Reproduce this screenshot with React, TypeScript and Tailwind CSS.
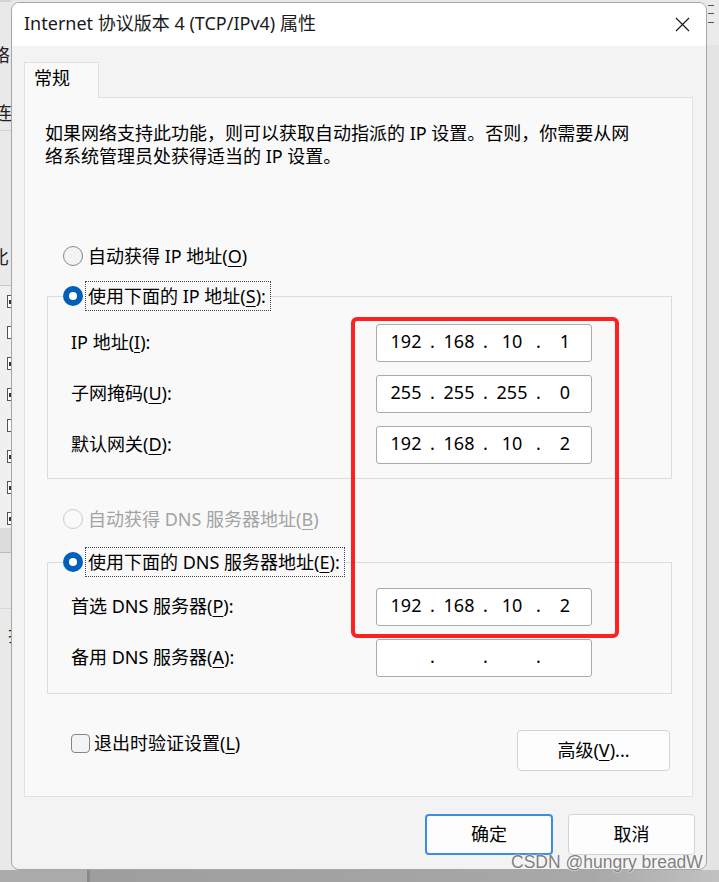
import { Fragment } from "react"

function U({ children }: { children: string }) {
  return <span className="underline decoration-1 underline-offset-[3px]">{children}</span>
}

function Radio({ checked = false, disabled = false }: { checked?: boolean; disabled?: boolean }) {
  if (checked) {
    return (
      <span className="flex h-[20px] w-[20px] shrink-0 items-center justify-center rounded-full bg-[#005fb8]">
        <span className="h-[8px] w-[8px] rounded-full bg-white" />
      </span>
    )
  }
  return (
    <span
      className={`h-[20px] w-[20px] shrink-0 rounded-full border ${
        disabled ? "border-[#cccccc] bg-[#f9f9f9]" : "border-[#868686] bg-[#f3f3f3]"
      }`}
    />
  )
}

function IpBox({ parts }: { parts: string[] }) {
  return (
    <div className="flex h-[38px] w-[216px] shrink-0 items-center rounded-[3px] border border-[#ababab] bg-white pb-[5px] pl-[6px] leading-[24px]">
      {parts.map((p, i) => (
        <Fragment key={i}>
          <span className="w-[46px] text-center">{p}</span>
          {i < 3 && <span className="w-[7px] text-center">.</span>}
        </Fragment>
      ))}
    </div>
  )
}

function Field({ label, parts }: { label: React.ReactNode; parts: string[] }) {
  return (
    <div className="ml-[8px] flex h-[38px] items-center">
      <div className="w-[305px] pb-[2px] leading-[24px]">{label}</div>
      <IpBox parts={parts} />
    </div>
  )
}

function Legend({ children }: { children: React.ReactNode }) {
  return (
    <legend>
      <div className="flex h-[30px] items-center">
        <Radio checked />
        <span className="ml-[2px] flex h-[30px] items-center border border-dotted border-[#444] pb-[1px] pl-[2px] pr-[4px] leading-[24px]">
          {children}
        </span>
      </div>
    </legend>
  )
}

// the window behind the dialog, only a sliver of it shows on the left
function LeftStrip() {
  const boxes = [true, false, true, true, false, true, true, true]
  return (
    <div className="flex w-[11px] shrink-0 flex-col overflow-hidden bg-[#e9e9e9] text-[18px] leading-[20px] text-[#222]">
      <div className="h-[2px] shrink-0 bg-[#d2d2d2]" />
      <div className="ml-[-8px] mt-[43px] shrink-0">络</div>
      <div className="ml-[-6px] mt-[38px] shrink-0">连</div>
      <div className="mt-[7px] h-px shrink-0 bg-[#d0d0d0]" />
      <div className="ml-[-9px] mt-[116px] shrink-0">比</div>
      <div className="mt-[18px] h-px shrink-0 bg-[#c6c6c6]" />
      <div className="flex shrink-0 flex-col bg-[#f0f0f0] pb-[3px] pt-[9px]">
        {boxes.map((c, i) => (
          <div
            key={i}
            className={`ml-[7px] flex h-[13px] w-[13px] shrink-0 items-center border border-[#555] bg-white ${
              i > 0 ? "mt-[18px]" : ""
            }`}
          >
            {c && <span className="ml-[1px] h-[4px] w-[2px] bg-[#333]" />}
          </div>
        ))}
      </div>
      <div className="h-[24px] shrink-0 bg-[#dcdcdc]" />
      <div className="h-px shrink-0 bg-[#bcbcbc]" />
      <div className="mt-[55px] h-px shrink-0 bg-[#d6d6d6]" />
      <div className="ml-[8px] mt-[16px] shrink-0">护</div>
    </div>
  )
}

function RightStrip() {
  return (
    <div className="flex w-[12px] shrink-0 flex-col bg-[#ebebeb]">
      <div className="ml-px mt-[5px] h-px w-[6px] bg-[#555]" />
      <div className="ml-px mt-[7px] h-px w-[6px] bg-[#555]" />
      <div className="ml-px mt-[8px] h-px w-[6px] bg-[#555]" />
      <div className="mt-[22px] flex-1 bg-[#e4e4e4]" />
    </div>
  )
}

export default function App() {
  return (
    <div className="relative flex h-[882px] w-[719px] flex-col overflow-hidden bg-[#e8e8e8] font-['Noto_Sans','Noto_Sans_CJK_SC',sans-serif] text-[18px] text-black">
      <div className="flex h-[870px] shrink-0">
        <LeftStrip />
        <div className="mt-[2px] flex h-[868px] w-[696px] shrink-0 flex-col overflow-hidden rounded-[8px] border border-[#a6a6a6] bg-[#f3f3f3]">
          {/* title bar */}
          <div className="flex h-[43px] shrink-0 items-center justify-between bg-white pb-[3px] pl-[12px] pr-[16px]">
            <span className="text-[18px] leading-[24px] text-[#1a1a1a]">Internet 协议版本 4 (TCP/IPv4) 属性</span>
            <svg width="15" height="15" viewBox="0 0 15 15" className="mt-[2px]">
              <path d="M1 1L14 14M14 1L1 14" stroke="#1a1a1a" strokeWidth="1.2" fill="none" />
            </svg>
          </div>

          {/* tab + panel */}
          <div className="ml-[12px] mt-[16px] flex flex-col">
            <div className="relative z-10 -mb-px flex h-[36px] w-[75px] items-center border border-b-0 border-[#e1e1e1] bg-[#f9f9f9] pb-[5px] pl-[9px] leading-[24px]">
              常规
            </div>
            <div className="flex h-[700px] w-[669px] flex-col border border-[#e1e1e1] bg-[#f9f9f9]">
              <p className="ml-[20px] mt-[24px] leading-[23px]">
                如果网络支持此功能，则可以获取自动指派的 IP 设置。否则，你需要从网
                <br />
                络系统管理员处获得适当的 IP 设置。
              </p>

              <div className="ml-[38px] mt-[76px] flex h-[24px] items-center leading-[24px]">
                <Radio />
                <span className="ml-[5px]">
                  自动获得 IP 地址(<U>O</U>)
                </span>
              </div>

              <fieldset className="ml-[22px] mt-[13px] w-[625px] border border-[#dcdcdc] px-[15px] pb-[14px]">
                <Legend>
                  使用下面的 IP 地址(<U>S</U>):
                </Legend>
                <div className="mt-[13px] flex flex-col gap-[13px]">
                  <Field label={<>IP 地址(<U>I</U>):</>} parts={["192", "168", "10", "1"]} />
                  <Field label={<>子网掩码(<U>U</U>):</>} parts={["255", "255", "255", "0"]} />
                  <Field label={<>默认网关(<U>D</U>):</>} parts={["192", "168", "10", "2"]} />
                </div>
              </fieldset>

              <div className="ml-[38px] mt-[28px] flex h-[24px] items-center leading-[24px] text-[#a3a3a3]">
                <Radio disabled />
                <span className="ml-[5px]">
                  自动获得 DNS 服务器地址(<U>B</U>)
                </span>
              </div>

              <fieldset className="ml-[22px] mt-[16px] w-[625px] border border-[#dcdcdc] px-[15px] pb-[16px]">
                <Legend>
                  使用下面的 DNS 服务器地址(<U>E</U>):
                </Legend>
                <div className="mt-[11px] flex flex-col gap-[13px]">
                  <Field label={<>首选 DNS 服务器(<U>P</U>):</>} parts={["192", "168", "10", "2"]} />
                  <Field label={<>备用 DNS 服务器(<U>A</U>):</>} parts={["", "", "", ""]} />
                </div>
              </fieldset>

              <div className="ml-[46px] mr-[22px] mt-[36px] flex items-start justify-between">
                <div className="mt-[1px] flex h-[24px] items-center leading-[24px]">
                  <span className="h-[19px] w-[19px] rounded-[4px] border border-[#868686] bg-[#f3f3f3]" />
                  <span className="ml-[4px]">
                    退出时验证设置(<U>L</U>)
                  </span>
                </div>
                <button className="flex h-[41px] w-[153px] items-center justify-center rounded-[4px] border border-[#d3d3d3] bg-[#fdfdfd] pb-[2px] leading-[24px]">
                  高级(<U>V</U>)...
                </button>
              </div>
            </div>
          </div>

          {/* dialog buttons */}
          <div className="mt-[17px] flex justify-end gap-[15px] pr-[11px]">
            <button className="flex h-[41px] w-[128px] items-center justify-center rounded-[4px] border-2 border-[#3d8ce0] bg-[#fdfdfd] pb-[2px] leading-[24px]">
              确定
            </button>
            <button className="flex h-[41px] w-[127px] items-center justify-center rounded-[4px] border border-[#d3d3d3] bg-[#fdfdfd] pb-[2px] leading-[24px]">
              取消
            </button>
          </div>
        </div>
        <RightStrip />
      </div>
      <div className="flex h-[12px] shrink-0">
        <div className="w-[87px] bg-[#ababab]" />
        <div className="w-[3px] bg-[#8a8a8a]" />
        <div className="flex-1 bg-[linear-gradient(90deg,#9e9e9e,#a8a8a8_80%,#c2c2c2)]" />
      </div>

      {/* red annotation box drawn over the screenshot */}
      <div className="absolute left-[351px] top-[317px] h-[321px] w-[268px] rounded-[6px] border-4 border-[#fe2020]" />

      {/* watermark */}
      <div className="absolute left-[511px] top-[850px] font-['Liberation_Sans',sans-serif] text-[17.5px] leading-[24px] text-[#7f7f7f] [text-shadow:0_0_2px_#ffffff,0_0_1px_#ffffff]">
        CSDN @hungry breadW
      </div>
    </div>
  )
}
